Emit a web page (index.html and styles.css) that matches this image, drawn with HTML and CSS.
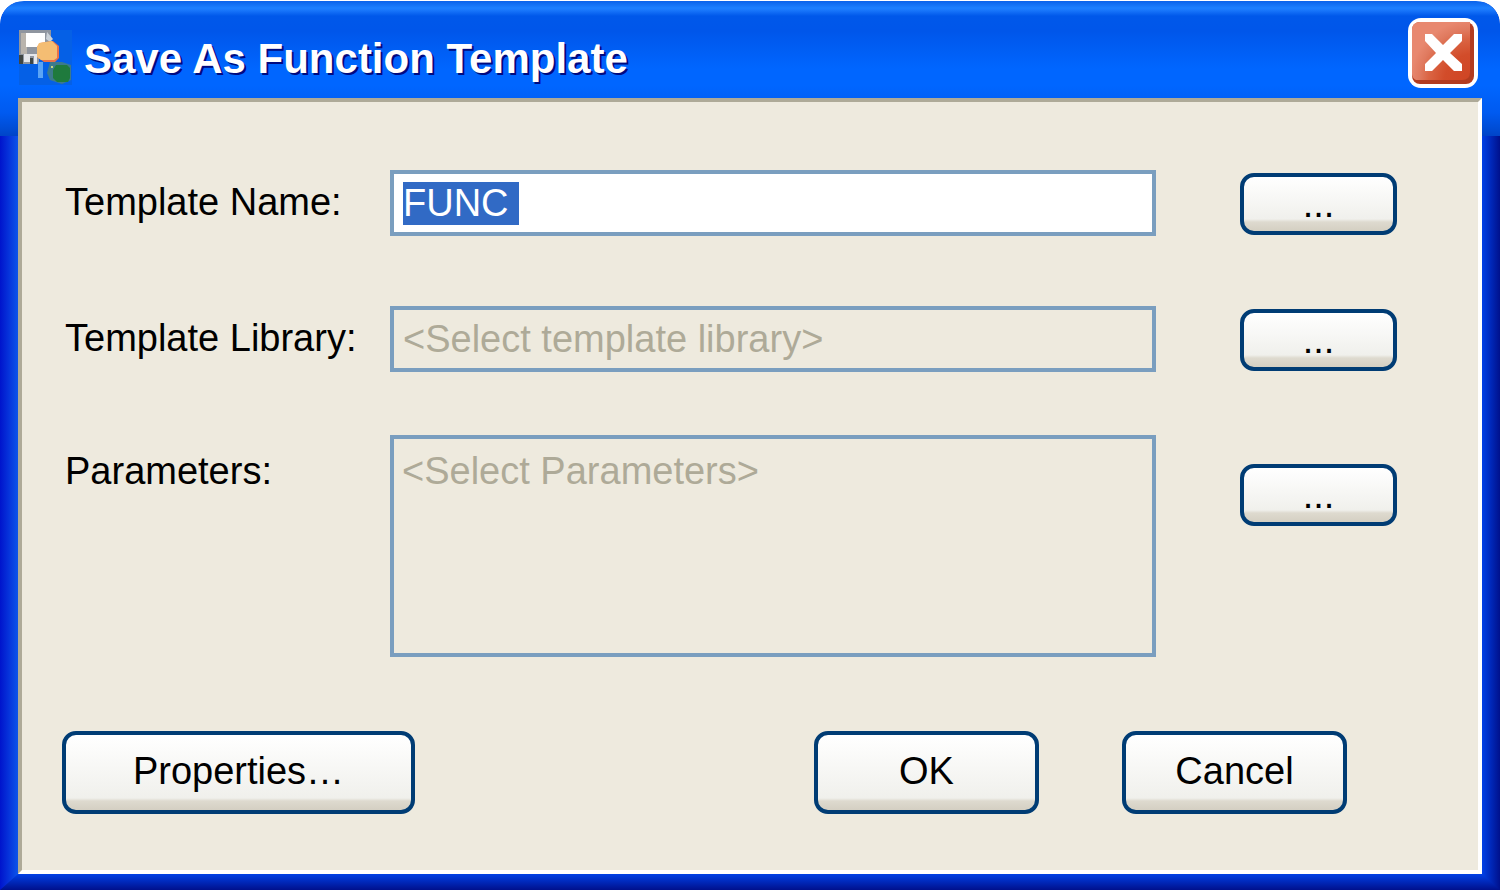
FILE: index.html
```html
<!doctype html>
<html lang="en">

<head>
    <meta charset="utf-8">
    <meta name="viewport" content="width=device-width, initial-scale=1.0">
    <title>Save As Function Template</title>
    <link rel="stylesheet" href="styles.css">
</head>

<body>
    <div class="window">
        <header class="title-bar">
            <svg class="app-icon" viewBox="0 0 53 55" aria-hidden="true">
                <rect width="53" height="55" fill="#0560e6"/>
                <path d="M0 0H32V9L28 17V25H20V34H0Z" fill="#8f959f"/>
                <path d="M2 3H8V24H2Z" fill="#b9b4ad"/>
                <path d="M7 3H26V17H7Z" fill="#fff"/>
                <path d="M5 24H18V34H15V26H11V32H5Z" fill="#e4e6ea"/>
                <path d="M0 25H4V34H0ZM11 28H14V34H11Z" fill="#3f4644"/>
                <path d="M28 2L34 9L31 12L27 9Z" fill="#ccd2d8"/>
                <path d="M21 13L34 11L40 16V28L36 32H25L18 27V17Z" fill="#e8724a"/>
                <path d="M20 13L33 11L38 16V28L35 30H22L18 27V17Z" fill="#f4bd73"/>
                <path d="M19 32H24V48H19Z" fill="#5ba4f5"/>
                <path d="M31 32H43L52 35V50L43 54L31 50L28 43Z" fill="#3c7a8c"/>
                <path d="M37 35H48L51 38V48L49 52H38L34 48V40Z" fill="#1f7a3d"/>
                <path d="M32 36H34V38H32Z" fill="#c9d67c"/>
            </svg>
            <h1>Save As Function Template</h1>
            <button type="button" class="close" aria-label="Close">
                <svg viewBox="0 0 70 70" aria-hidden="true">
                    <defs>
                        <radialGradient id="closeFill" gradientUnits="userSpaceOnUse" cx="64" cy="64" r="62">
                            <stop offset="0" stop-color="#cf4423"/>
                            <stop offset="0.45" stop-color="#d24c2a"/>
                            <stop offset="0.7" stop-color="#da6443"/>
                            <stop offset="0.85" stop-color="#e07a5f"/>
                            <stop offset="1" stop-color="#e8886f"/>
                        </radialGradient>
                    </defs>
                    <rect width="70" height="70" rx="13" fill="#fff"/>
                    <rect x="4" y="4" width="62" height="62" rx="8" fill="#b23c20"/>
                    <path d="M12 4H62V54Q62 62 54 62H8Q4 60 4 56V12Q4 4 12 4Z" fill="url(#closeFill)"/>
                    <path d="M17 16H24L35 27L46 16H54V23L42 35L54 46V53H46L35 42L24 53H17V46L28 35L17 23Z" fill="#fff"/>
                </svg>
            </button>
        </header>

        <form class="dialog">
            <div class="fields">
                <label for="templateName">Template Name:</label>
                <input type="text" id="templateName" class="name" value="FUNC " autocomplete="off" spellcheck="false">
                <button type="button" class="browse" aria-label="Browse names">...</button>

                <label for="templateLibrary">Template Library:</label>
                <input type="text" id="templateLibrary" placeholder="&lt;Select template library&gt;">
                <button type="button" class="browse" aria-label="Browse libraries">...</button>

                <label for="parameters" class="low">Parameters:</label>
                <textarea id="parameters" placeholder="&lt;Select Parameters&gt;"></textarea>
                <button type="button" class="browse low" aria-label="Browse parameters">...</button>
            </div>

            <div class="actions">
                <button type="button" class="properties">Properties…</button>
                <button type="submit">OK</button>
                <button type="button">Cancel</button>
            </div>
        </form>

        <div class="frame-bottom"></div>
    </div>

    <script>
        // The name is preselected so that typing replaces it
        const nameInput = document.getElementById('templateName');
        nameInput.focus();
        nameInput.select();

        document.querySelector('.dialog').addEventListener('submit', event => event.preventDefault());
    </script>
</body>

</html>
```
FILE: styles.css
```css
* {
    box-sizing: border-box;
}

html, body {
    margin: 0;
    padding: 0;
    background: #ffffff;
}

body, button, input, textarea {
    font-family: 'Liberation Sans', Arial, sans-serif;
    font-size: 38px;
    line-height: 48px;
    color: #000000;
}

/* Window frame: title gradient on top, side bars below it */
.window {
    display: flex;
    flex-direction: column;
    min-height: 100vh;
    padding: 1px 0;
    border-radius: 24px 24px 0 0;
    background:
        linear-gradient(180deg, #0a62ea 0, #1c80ff 7px, #1a78fc 9px, #0058ea 15px, #0056ea 30px, #0066ff 68px, #0066ff 85px, #005af0 112px, #004cd4 128px, #0044c8 135px) 0 1px / 100% 135px no-repeat,
        linear-gradient(90deg, #0014cc, #0c54ea) 0 0 / 18px 100% no-repeat,
        linear-gradient(90deg, #0040e6, #00108c) 100% 0 / 18px 100% no-repeat;
    background-clip: content-box;
}

.title-bar {
    display: flex;
    align-items: center;
    height: 97px;
    padding: 15px 22px 0 19px;
}

.app-icon {
    width: 53px;
    height: 55px;
    margin-right: 12px;
}

h1 {
    flex: 1;
    margin: 0;
    padding-top: 4px;
    font-size: 42px;
    line-height: 48px;
    font-weight: 700;
    color: #ffffff;
    text-shadow: 2px 2px 0 #000a80;
}

.close {
    width: 70px;
    height: 70px;
    margin-bottom: 8px;
    padding: 0;
    border: 0;
    background: none;
}

.close svg {
    display: block;
}

.dialog {
    flex: 1;
    margin: 0 18px;
    padding: 68px 81px 0 40px;
    background: #eeeade;
    border: 4px solid;
    border-color: #aeaa98 #ffffff #ffffff #aeaa98;
}

.fields {
    display: grid;
    grid-template-columns: 325px 1fr 241px;
    grid-template-rows: 136px 129px auto;
    align-items: start;
    padding-left: 3px;
}

label {
    padding-top: 8px;
}

label.low {
    padding-top: 12px;
}

input, textarea {
    width: 100%;
    border: 4px solid #7a9ebf;
    border-radius: 0;
    outline: none;
    background: transparent;
}

input {
    height: 66px;
    padding: 0 9px;
}

input.name {
    background: #ffffff;
}

textarea {
    display: block;
    height: 222px;
    padding: 8px;
    resize: none;
}

::placeholder {
    color: #aeaa98;
    opacity: 1;
}

::selection {
    background: #316ac5;
    color: #ffffff;
}

.dialog button {
    padding: 0 0 4px;
    border: 4px solid #003c74;
    border-radius: 14px;
    background: linear-gradient(180deg, #ffffff 0, #f0f0ec calc(100% - 12px), #dedacf calc(100% - 9px), #d4cfc2 100%);
}

.dialog .browse {
    justify-self: end;
    width: 157px;
    height: 62px;
    margin-top: 3px;
    padding: 0;
}

.dialog .browse.low {
    margin-top: 29px;
}

.actions {
    display: flex;
    gap: 83px;
    margin-top: 74px;
    padding-right: 50px;
}

.actions button {
    width: 225px;
    height: 83px;
}

.actions .properties {
    width: 353px;
    margin-right: auto;
}

.frame-bottom {
    height: 16px;
    background: linear-gradient(180deg, #0040e6, #00108c);
    clip-path: polygon(18px 0, calc(100% - 18px) 0, 100% 100%, 0 100%);
}
```
